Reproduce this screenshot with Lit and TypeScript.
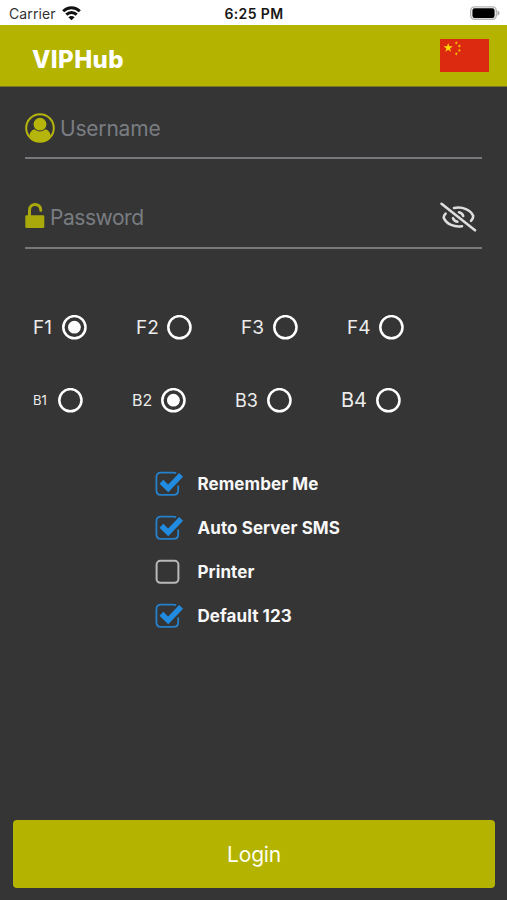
import { LitElement, html, css, svg } from "lit";
import { customElement, property, state } from "lit/decorators.js";

interface Choice {
  label: string;
  width: number;
  size: number;
}

const STAR = "M0-1 .2245-.309 .951-.309 .3633.118 .5878.809 0 .382-.5878.809-.3633.118-.951-.309-.2245-.309z";

@customElement("status-bar")
class StatusBar extends LitElement {
  static styles = css`
    :host {
      display: grid;
      grid-template-columns: 1fr auto 1fr;
      align-items: center;
      height: 25px;
      padding: 2px 7px 0 9px;
      box-sizing: border-box;
      background: #fff;
      color: #171717;
      font-size: 14px;
      line-height: 23px;
    }
    .left { display: flex; align-items: center; gap: 6px; }
    .carrier { letter-spacing: 0.12px; color: #333; }
    .time { font-weight: 600; letter-spacing: 0.4px; margin-right: 1px; }
    .battery { justify-self: end; display: block; }
  `;
  render() {
    return html`
      <div class="left">
        <span class="carrier">Carrier</span>
        <svg width="19" height="15" viewBox="0 0 19 15">
          <g fill="none" stroke="#111" stroke-width="3">
            <path d="M1.2 5.2C6 .5 13 .5 17.8 5.2" />
            <path d="M4.3 8.7c3-2.9 7.4-2.9 10.4 0" />
          </g>
          <path d="M6.4 11.3c1.8-1.7 4.4-1.7 6.2 0L9.5 14.3z" fill="#111" />
        </svg>
      </div>
      <span class="time">6:25 PM</span>
      <svg class="battery" width="30" height="15" viewBox="0 0 30 15">
        <rect x=".7" y=".9" width="25.6" height="12.4" rx="3.8" fill="#fff" stroke="#b4b4b4" stroke-width="1.4" />
        <rect x="2.4" y="2.3" width="22.2" height="9.6" rx="2.2" fill="#000" />
        <path d="M27.5 4.6c2.7 1 2.7 4.1 0 5.1z" fill="#aaa" />
      </svg>
    `;
  }
}

@customElement("china-flag")
class ChinaFlag extends LitElement {
  static styles = css`
    :host, svg { display: block; }
  `;
  render() {
    const small = [[16.4, 3.9], [19.4, 7], [19.4, 11.4], [16.4, 14.8]];
    return html`
      <svg width="49" height="33" viewBox="0 0 49 33">
        <rect width="49" height="33" fill="#dc2a10" />
        <g fill="#fddb00">
          <path transform="translate(8.2 8.8) scale(4.9)" d=${STAR} />
          ${small.map(([x, y]) => svg`<path opacity=".85" transform="translate(${x} ${y}) rotate(20) scale(1.9)" d=${STAR} />`)}
        </g>
      </svg>
    `;
  }
}

@customElement("radio-row")
class RadioRow extends LitElement {
  @property({ attribute: false }) choices: Choice[] = [];
  @property({ type: Number }) selected = 0;
  static styles = css`
    :host { display: flex; gap: 49px; height: 25px; padding-left: 33px; }
    .choice { display: flex; align-items: center; justify-content: space-between; color: #ececec; line-height: 25px; white-space: nowrap; }
    .dial { display: block; flex: none; }
  `;
  render() {
    return this.choices.map(
      (c, i) => html`
        <div class="choice" style="width:${c.width}px;font-size:${c.size}px" @click=${() => (this.selected = i)}>
          <span>${c.label}</span>
          <svg class="dial" width="25" height="25" viewBox="0 0 25 25">
            <circle cx="12.4" cy="12.2" r="11.1" fill="none" stroke="#fff" stroke-width="2.5" />
            ${i === this.selected ? svg`<circle cx="12.4" cy="12.2" r="6.4" fill="#fff" />` : ""}
          </svg>
        </div>
      `
    );
  }
}

@customElement("check-item")
class CheckItem extends LitElement {
  @property() label = "";
  @property({ type: Boolean, reflect: true }) checked = false;
  static styles = css`
    :host { display: flex; align-items: center; height: 44px; gap: 13.5px; color: #f8f8f8; font-weight: 700; font-size: 17px; letter-spacing: 0.08px; white-space: nowrap; }
    svg { display: block; flex: none; }
  `;
  render() {
    return html`
      <svg width="29" height="26" viewBox="0 0 29 26" @click=${() => (this.checked = !this.checked)}>
        ${this.checked
          ? svg`
              <path d="M21.2 2.3Q20 1.7 18 1.7H5.8Q1.4 1.7 1.4 6.3V19.2Q1.4 23.8 5.8 23.8H18.6Q23.2 23.8 23.2 19.2V14.5" fill="none" stroke="#2581cb" stroke-width="1.8" />
              <path d="M6.4 10.8 13.2 17.4 26.1 3.8" fill="none" stroke="#218bdf" stroke-width="5.4" />`
          : svg`<rect x="1.6" y="1.8" width="21.8" height="22" rx="3.8" fill="none" stroke="#b9b9b9" stroke-width="2" />`}
      </svg>
      <span>${this.label}</span>
    `;
  }
}

@customElement("app-root")
class AppRoot extends LitElement {
  @state() private floors: Choice[] = [
    { label: "F1", width: 54, size: 19 },
    { label: "F2", width: 56, size: 19 },
    { label: "F3", width: 57, size: 19 },
    { label: "F4", width: 57, size: 19 },
  ];
  @state() private blocks: Choice[] = [
    { label: "B1", width: 50, size: 13 },
    { label: "B2", width: 54, size: 16 },
    { label: "B3", width: 57, size: 18 },
    { label: "B4", width: 60, size: 20 },
  ];
  static styles = css`
    :host {
      display: flex;
      flex-direction: column;
      height: 900px;
      box-sizing: border-box;
      overflow: hidden;
      background: #353535;
      font-family: Inter, "Liberation Sans", sans-serif;
    }
    .header {
      display: flex;
      align-items: center;
      justify-content: space-between;
      height: 62px;
      box-sizing: border-box;
      padding: 0 18px 0 32px;
      background: #b3b300;
      border-bottom: 1px solid #77762b;
    }
    .title { color: #fff; font-size: 24px; font-weight: 800; letter-spacing: 0.4px; padding-top: 7px; }
    .field {
      display: flex;
      align-items: center;
      margin: 0 25px;
      box-sizing: border-box;
      border-bottom: 2px solid #77787c;
      color: #797d82;
      font-size: 21px;
      line-height: 30px;
    }
    .field svg { display: block; flex: none; }
    .username { height: 72px; padding-top: 12px; gap: 5px; letter-spacing: -0.2px; }
    .username span { padding-top: 1px; }
    .password { height: 90px; padding-top: 29px; gap: 5px; letter-spacing: -0.45px; }
    .lock { margin-bottom: 4px; }
    .eye { margin: 0 5px 2px auto; }
    .floors { margin-top: 66px; }
    .blocks { margin-top: 48px; }
    .checks { margin: 49px 0 0 155px; }
    .login {
      margin: auto 12px 12px 13px;
      height: 68px;
      flex: none;
      border: 0;
      border-radius: 4px;
      background: #b3b300;
      color: #fffff0;
      font: 400 21px Inter, "Liberation Sans", sans-serif;
      letter-spacing: -0.2px;
    }
  `;
  render() {
    return html`
      <status-bar></status-bar>
      <div class="header">
        <span class="title">VIPHub</span>
        <china-flag></china-flag>
      </div>
      <div class="field username">
        <svg width="30" height="30" viewBox="0 0 30 30">
          <circle cx="15" cy="15" r="13.8" fill="none" stroke="#b5b50b" stroke-width="2" />
          <path d="M4.3 22.6Q5.2 17.4 9.6 16.2Q15 21 20.4 16.2Q24.8 17.4 25.7 22.6Q21.5 28.8 15 28.8Q8.5 28.8 4.3 22.6z" fill="#b5b50b" />
          <circle cx="15" cy="11.2" r="6.4" fill="#b5b50b" />
        </svg>
        <span>Username</span>
      </div>
      <div class="field password">
        <svg class="lock" width="20" height="28" viewBox="0 0 20 28">
          <path d="M4.5 13.5V8.2C4.5 .7 15.8.7 15.8 8.2" fill="none" stroke="#a9a90c" stroke-width="3" stroke-linecap="round" />
          <rect x=".3" y="13.2" width="19" height="12.8" rx="1.2" fill="#a9a90c" />
        </svg>
        <span>Password</span>
        <svg class="eye" width="37" height="30" viewBox="0 0 37 30">
          <g fill="none" stroke="#dedede" stroke-width="2.6" stroke-linecap="round">
            <path d="M1.5 1.8 35 28.3" />
            <path d="M14 6C22.5 4.2 31 8 33.2 14Q33.3 16.4 31 18.8" />
            <path d="M5.6 11.6Q3.6 13.4 3.7 15.8C6.5 22.4 14.5 25.4 22 24.2" />
            <path d="M19 10.2Q22.5 11 23.2 14" />
            <path d="M13 16.2Q14 19 17.4 19.8" />
          </g>
        </svg>
      </div>
      <radio-row class="floors" .choices=${this.floors} .selected=${0}></radio-row>
      <radio-row class="blocks" .choices=${this.blocks} .selected=${1}></radio-row>
      <div class="checks">
        <check-item label="Remember Me" checked></check-item>
        <check-item label="Auto Server SMS" checked></check-item>
        <check-item label="Printer"></check-item>
        <check-item label="Default 123" checked></check-item>
      </div>
      <button class="login">Login</button>
    `;
  }
}
